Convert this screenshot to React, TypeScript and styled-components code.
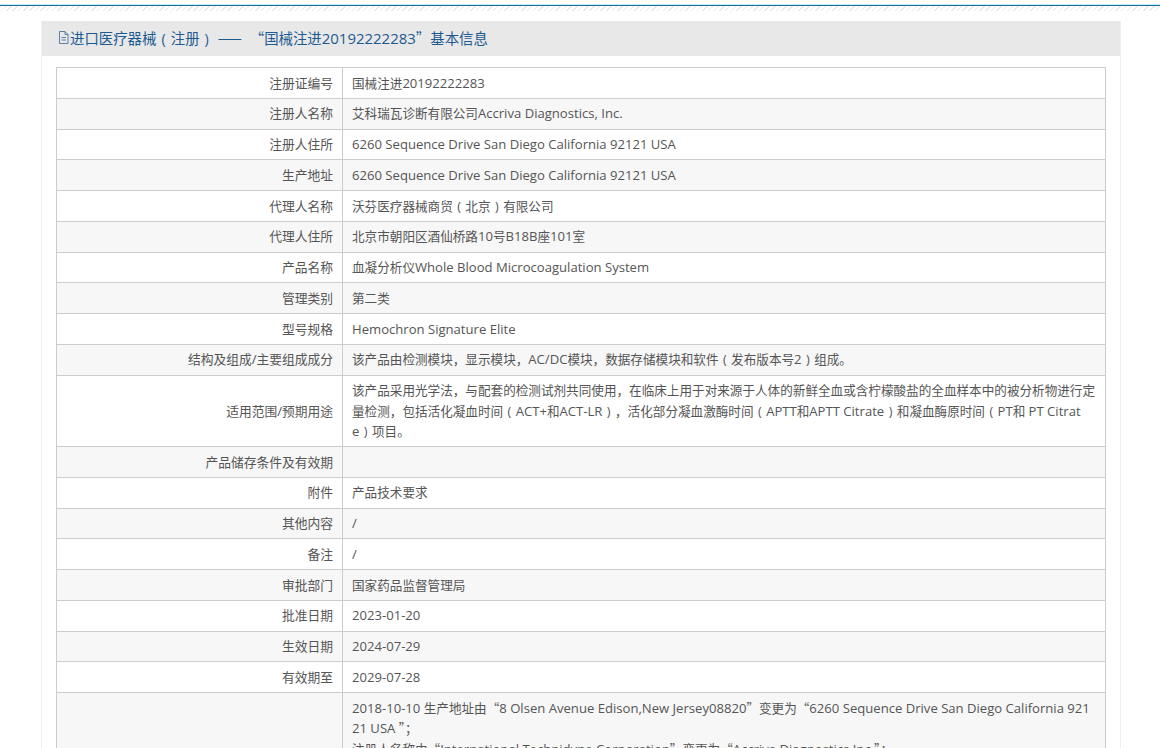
import React from 'react'
import styled, { createGlobalStyle } from 'styled-components'

const GlobalStyle = createGlobalStyle`
    html, body {
        margin: 0;
        padding: 0;
        height: 748px;
        overflow: hidden;
        background: #fff;
    }
    body {
        font-family: "Noto Sans CJK SC", "Open Sans", sans-serif;
        font-size: 12.6px;
        color: #555;
    }
`

const TopBand = styled.div`
    height: 11px;
    box-sizing: border-box;
    padding-top: 5px;
    background-clip: content-box;
    background-image: repeating-linear-gradient(135deg, #e8e8e8 0 1px, #fff 1px 4px);
    &::before {
        content: '';
        display: block;
        height: 1px;
        background: #1a6f96;
        box-shadow: 0 -1px 0 #c6edf6;
    }
`

const Page = styled.main`
    padding: 10px 39px 0 41px;
`

const Panel = styled.section`
    border: 1px solid #eee;
    border-top: 0;
    border-bottom: 0;
    background: #fff;
`

const PanelHeader = styled.header`
    height: 35px;
    box-sizing: border-box;
    padding: 0 15px 2px;
    background: #e8e8e8;
    display: flex;
    align-items: center;
    color: #1d5a92;
    font-size: 14.4px;
    white-space: pre;
`

const PanelBody = styled.div`
    padding: 11px 14px 0;
`

const InfoTable = styled.table`
    width: 100%;
    border-collapse: collapse;
    table-layout: fixed;
`

const Row = styled.tr<{ $alt: boolean }>`
    background: ${props => (props.$alt ? '#f7f7f7' : '#fff')};
`

const LabelCell = styled.td`
    width: 286px;
    box-sizing: border-box;
    border: 1px solid #ccc;
    padding: 4.68px 9px;
    font-size: 12.75px;
    line-height: 20.4px;
    text-align: right;
    vertical-align: middle;
    word-break: break-all;
`

const ValueCell = styled.td`
    border: 1px solid #ccc;
    padding: 4.68px 9px;
    line-height: 20.4px;
    vertical-align: middle;
    word-break: break-all;
`

const LatinRun = styled.span`
    font-family: "Open Sans", sans-serif;
    font-size: 1.04em;
    line-height: 1;
`

const Paren = styled.span`
    display: inline-block;
    width: 1em;
    text-align: center;
    font-family: "Open Sans", sans-serif;
    line-height: 1;
`

const FileIcon = () => (
    <svg width="13" height="15" viewBox="0 0 13 15" fill="none" stroke="#5c7fa3" strokeWidth="1">
        <path d="M2.5 1.5h5.5l3 3v9h-8.5z" />
        <path d="M8 1.5v3h3M4.5 7.5h4.5M4.5 10h4.5" />
    </svg>
)

// YaHei-like look: ascii runs are a touch larger, full width parens sit centred
const MixedText = ({ text }: { text: string }) => (
    <>
        {text.split(/([\x20-\x7e]+|[（）])/).map((part, index) => {
            if (part === '（') return <Paren key={index}>(</Paren>
            if (part === '）') return <Paren key={index}>)</Paren>
            if (/^[\x20-\x7e]+$/.test(part)) return <LatinRun key={index}>{part}</LatinRun>
            return part
        })}
    </>
)

const rows: [string, string[]][] = [
    ['注册证编号', ['国械注进20192222283']],
    ['注册人名称', ['艾科瑞瓦诊断有限公司Accriva Diagnostics, Inc.']],
    ['注册人住所', ['6260 Sequence Drive San Diego California 92121 USA']],
    ['生产地址', ['6260 Sequence Drive San Diego California 92121 USA']],
    ['代理人名称', ['沃芬医疗器械商贸（北京）有限公司']],
    ['代理人住所', ['北京市朝阳区酒仙桥路10号B18B座101室']],
    ['产品名称', ['血凝分析仪Whole Blood Microcoagulation System']],
    ['管理类别', ['第二类']],
    ['型号规格', ['Hemochron Signature Elite']],
    ['结构及组成/主要组成成分', ['该产品由检测模块，显示模块，AC/DC模块，数据存储模块和软件（发布版本号2）组成。']],
    ['适用范围/预期用途', [
        '该产品采用光学法，与配套的检测试剂共同使用，在临床上用于对来源于人体的新鲜全血或含柠檬酸盐的全血样本中的被分析物进行定',
        '量检测，包括活化凝血时间（ACT+和ACT-LR），活化部分凝血激酶时间（APTT和APTT Citrate）和凝血酶原时间（PT和 PT Citrat',
        'e）项目。',
    ]],
    ['产品储存条件及有效期', ['']],
    ['附件', ['产品技术要求']],
    ['其他内容', ['/']],
    ['备注', ['/']],
    ['审批部门', ['国家药品监督管理局']],
    ['批准日期', ['2023-01-20']],
    ['生效日期', ['2024-07-29']],
    ['有效期至', ['2029-07-28']],
    ['', [
        '2018-10-10 生产地址由“8 Olsen Avenue Edison,New Jersey08820”变更为“6260 Sequence Drive San Diego California 92121 USA ”；',
        '注册人名称由“International Technidyne Corporation”变更为“Accriva Diagnostics Inc.”；',
    ]],
]

export default function App() {
    return (
        <>
            <GlobalStyle />
            <TopBand />
            <Page>
                <Panel>
                    <PanelHeader>
                        <FileIcon />
                        <span>
                            <MixedText text="进口医疗器械（注册） ——  “国械注进20192222283”基本信息" />
                        </span>
                    </PanelHeader>
                    <PanelBody>
                        <InfoTable>
                            <tbody>
                                {rows.map(([label, lines], index) => (
                                    <Row key={index} $alt={index % 2 === 1}>
                                        <LabelCell>
                                            <MixedText text={label} />
                                        </LabelCell>
                                        <ValueCell>
                                            {lines.map(line => (
                                                <div key={line}>
                                                    <MixedText text={line} />
                                                </div>
                                            ))}
                                        </ValueCell>
                                    </Row>
                                ))}
                            </tbody>
                        </InfoTable>
                    </PanelBody>
                </Panel>
            </Page>
        </>
    )
}
